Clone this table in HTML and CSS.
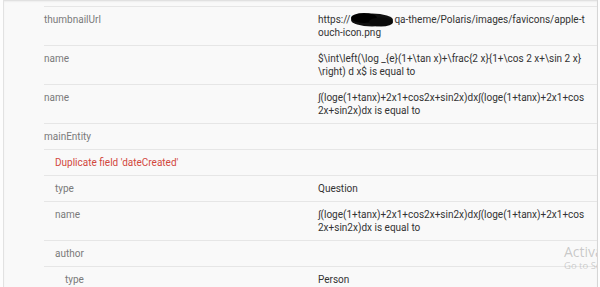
FILE: index.html
```html
<!DOCTYPE html>
<html>
<head>
<meta charset="utf-8">
<link rel="stylesheet" href="styles.css">
</head>
<body>
<div class="panel">
  <div class="table">
    <div class="row">
      <div class="key">thumbnailUrl</div>
      <div class="val url">https://<span class="redact"><svg width="44" height="14" viewBox="0 0 44 14"><ellipse cx="22" cy="7" rx="21" ry="6.5" fill="#111"/><ellipse cx="14" cy="5" rx="13" ry="5" fill="#000"/><ellipse cx="31" cy="9" rx="12" ry="4.5" fill="#0a0a0a"/></svg></span>qa-theme/Polaris/images/favicons/apple-touch-icon.png</div>
    </div>
    <div class="row">
      <div class="key">name</div>
      <div class="val">$\int\left(\log _{e}(1+\tan x)+\frac{2 x}{1+\cos 2 x+\sin 2 x} \right) d x$ is equal to</div>
    </div>
    <div class="row">
      <div class="key">name</div>
      <div class="val">∫(loge(1+tanx)+2x1+cos2x+sin2x)dx∫(loge(1+tanx)+2x1+cos2x+sin2x)dx is equal to</div>
    </div>
    <div class="row">
      <div class="key">mainEntity</div>
      <div class="val"></div>
    </div>
    <div class="row">
      <div class="key lvl1 error">Duplicate field 'dateCreated'</div>
      <div class="val"></div>
    </div>
    <div class="row">
      <div class="key lvl1">type</div>
      <div class="val">Question</div>
    </div>
    <div class="row">
      <div class="key lvl1">name</div>
      <div class="val">∫(loge(1+tanx)+2x1+cos2x+sin2x)dx∫(loge(1+tanx)+2x1+cos2x+sin2x)dx is equal to</div>
    </div>
    <div class="row">
      <div class="key lvl1">author</div>
      <div class="val"></div>
    </div>
    <div class="row">
      <div class="key lvl2">type</div>
      <div class="val">Person</div>
    </div>
  </div>
  <div class="watermark">
    <div class="wm-title">Activate Windows</div>
    <div class="wm-sub">Go to Settings to activate Windows.</div>
  </div>
</div>
</body>
</html>
```

FILE: styles.css
```css
html, body {
  margin: 0;
  padding: 0;
  background: #fdfdfd;
  height: 100%;
  overflow: hidden;
}

.panel {
  position: relative;
  margin-left: 3px;
  width: 593px;
  height: 287px;
  background: #f9f9f9;
  border-left: 1px solid #e2e2e2;
  border-right: 1px solid #d6d6d6;
  box-shadow: inset 0 2px 2px -1px #d8d8d8;
  overflow: hidden;
  font-family: Roboto, "Liberation Sans", sans-serif;
  font-size: 10px;
  line-height: 13px;
}

.table {
  padding-top: 6px;
  margin-left: 40px;
}

.row {
  display: flex;
  border-top: 1px solid #e6e6e6;
  padding: 6px 0;
  min-height: 13px;
}

.key {
  width: 274px;
  flex: none;
  color: #7a7a7a;
  box-sizing: border-box;
}

.lvl1 { padding-left: 11px; }
.lvl2 { padding-left: 21px; }

.error { color: #d2483d; }

.val {
  flex: 1;
  color: #333333;
  padding-right: 8px;
  overflow-wrap: anywhere;
}

.url { word-break: break-all; }

.redact {
  display: inline-block;
  width: 44px;
  height: 13px;
  vertical-align: -3px;
  margin-right: 0;
}

.redact svg { display: block; filter: blur(0.6px); }

.watermark {
  position: absolute;
  left: 560px;
  top: 243px;
  white-space: nowrap;
  font-family: "Open Sans", "Noto Sans", sans-serif;
  color: rgba(140, 140, 140, 0.45);
}

.wm-title {
  font-size: 14px;
  line-height: 17px;
}

.wm-sub {
  font-size: 9.5px;
  line-height: 12px;
  color: rgba(140, 140, 140, 0.4);
}
```
